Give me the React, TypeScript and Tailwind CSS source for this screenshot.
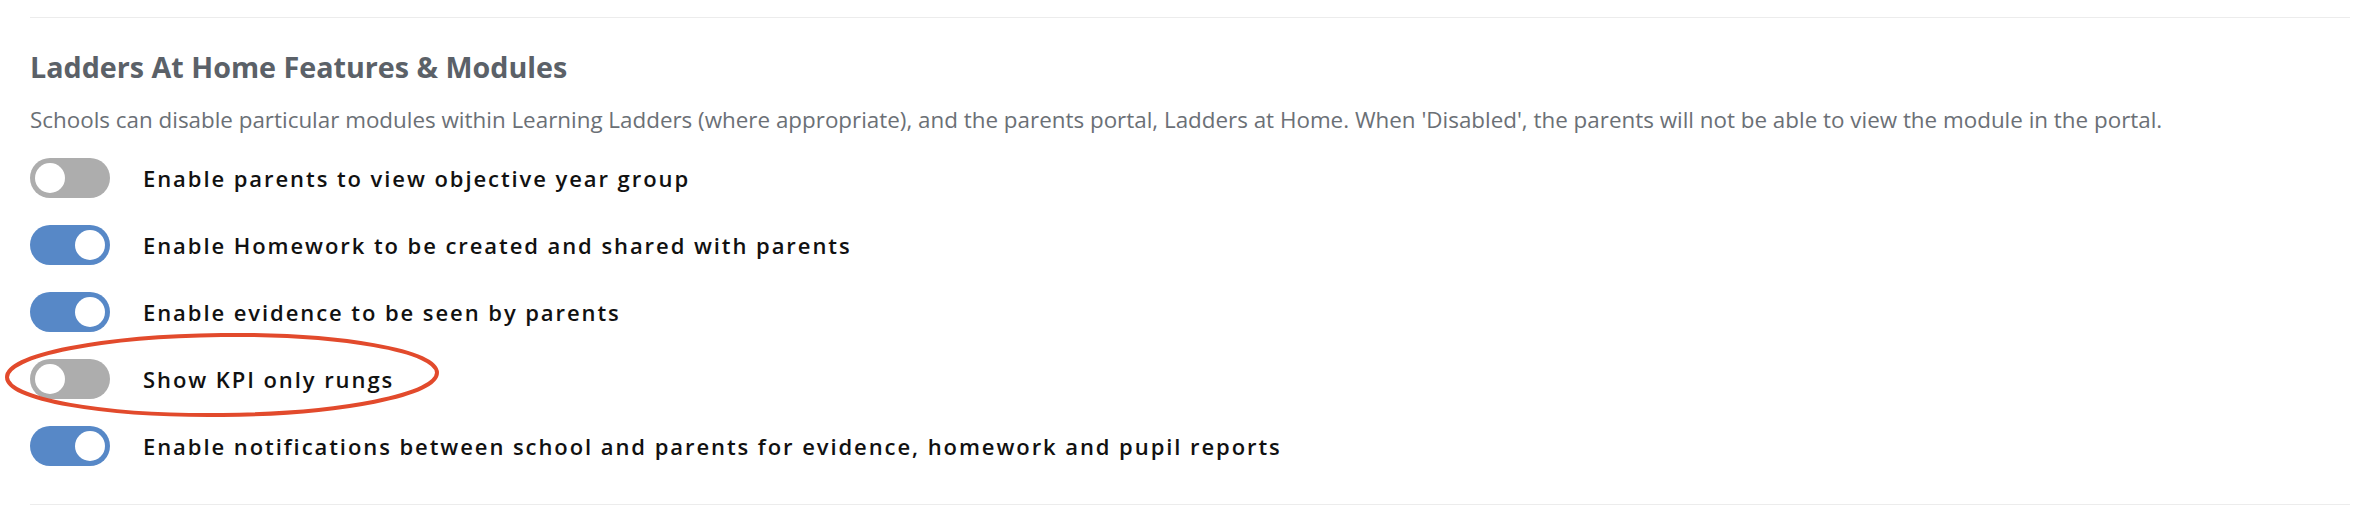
import React from 'react';

interface Feature {
  label: string;
  enabled: boolean;
}

const features: Feature[] = [
  { label: 'Enable parents to view objective year group', enabled: false },
  { label: 'Enable Homework to be created and shared with parents', enabled: true },
  { label: 'Enable evidence to be seen by parents', enabled: true },
  { label: 'Show KPI only rungs', enabled: false },
  { label: 'Enable notifications between school and parents for evidence, homework and pupil reports', enabled: true },
];

const Toggle: React.FC<{ on: boolean }> = ({ on }) => (
  <div
    className={`w-[80px] h-[40px] rounded-full flex items-center px-[5px] shrink-0 ${
      on ? 'bg-[#5788c7] justify-end' : 'bg-[#adadad] justify-start'
    }`}
  >
    <div className="w-[30px] h-[30px] rounded-full bg-white" />
  </div>
);

export default function App() {
  return (
    <div className="relative w-[2380px] h-[528px] bg-white px-[30px] pt-[17px] font-['Open_Sans',sans-serif]">
      <div className="border-t border-[#ececec]" />

      <h2 className="mt-[32px] text-[28.7px] leading-[34px] font-bold text-[#5b6168]">
        Ladders At Home Features &amp; Modules
      </h2>

      <p className="mt-[20px] text-[22.4px] leading-[31px] text-[#6b7076]">
        Schools can disable particular modules within Learning Ladders (where appropriate), and the parents portal, Ladders at Home. When 'Disabled', the parents will not be able to view the module in the portal.
      </p>

      <div className="mt-[23px] flex flex-col gap-[27px]">
        {features.map((f) => (
          <div key={f.label} className="flex items-center h-[40px]">
            <Toggle on={f.enabled} />
            <span className="ml-[33px] text-[22px] font-semibold tracking-[1.93px] text-[#111111]">
              {f.label}
            </span>
          </div>
        ))}
      </div>

      <div className="mt-[38px] border-t border-[#ececec]" />

      {/* annotation ring around the KPI toggle */}
      <svg
        className="absolute left-0 top-[320px] pointer-events-none"
        width="460"
        height="120"
        viewBox="0 0 460 120"
      >
        <ellipse
          cx="222"
          cy="55"
          rx="215"
          ry="40"
          fill="none"
          stroke="#e24a2c"
          strokeWidth="4"
          transform="rotate(-0.6 222 55)"
        />
      </svg>
    </div>
  );
}
